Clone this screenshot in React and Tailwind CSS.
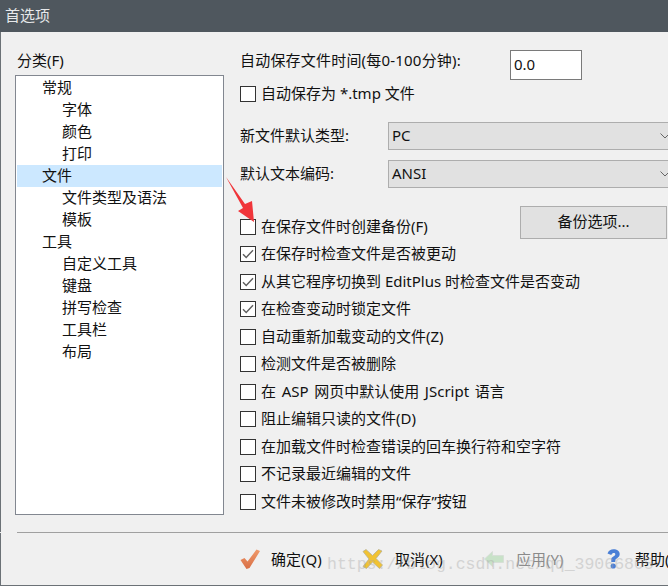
const font = { fontFamily: '"Noto Sans", "Noto Sans CJK SC", sans-serif' };

const tree = [
  ["常规", 0],
  ["字体", 1],
  ["颜色", 1],
  ["打印", 1],
  ["文件", 0, true],
  ["文件类型及语法", 1],
  ["模板", 1],
  ["工具", 0],
  ["自定义工具", 1],
  ["键盘", 1],
  ["拼写检查", 1],
  ["工具栏", 1],
  ["布局", 1],
];

const checks = [
  ["在保存文件时创建备份(F)", false],
  ["在保存时检查文件是否被更动", true],
  ["从其它程序切换到 EditPlus 时检查文件是否变动", true],
  ["在检查变动时锁定文件", true],
  ["自动重新加载变动的文件(Z)", false],
  ["检测文件是否被删除", false],
  ["在 ASP 网页中默认使用 JScript 语言", false, "[word-spacing:1.75px]"],
  ["阻止编辑只读的文件(D)", false],
  ["在加载文件时检查错误的回车换行符和空字符", false],
  ["不记录最近编辑的文件", false],
  ["文件未被修改时禁用“保存”按钮", false],
];

function Box({ checked }) {
  return (
    <span className="flex h-4 w-4 shrink-0 items-center justify-center border border-[#333333] bg-white">
      {checked && (
        <svg width="12" height="10" viewBox="0 0 12 10" fill="none">
          <path d="M1 5.2 L4.2 8.4 L11 1.2" stroke="#5e5e5e" strokeWidth="1.4" />
        </svg>
      )}
    </span>
  );
}

function Select({ label, value }) {
  return (
    <div className="flex h-7 items-center">
      <span className="w-[148px] shrink-0 pb-[2px]">{label}</span>
      <div className="flex h-7 w-[290px] shrink-0 items-center border border-[#adadad] bg-[#e1e1e1] pl-[3px] pr-[7px]">
        <span className="flex-1 pb-[2px]">{value}</span>
        <svg width="10" height="6" viewBox="0 0 10 6" fill="none">
          <path d="M0.5 0.5 L5 5 L9.5 0.5" stroke="#666666" strokeWidth="1" />
        </svg>
      </div>
    </div>
  );
}

function Ok() {
  return (
    <svg width="20" height="20" viewBox="0 0 20 20">
      <defs>
        <linearGradient id="okg" x1="0" y1="0" x2="0" y2="1">
          <stop offset="0" stopColor="#ef9a6c" />
          <stop offset="1" stopColor="#d96f45" />
        </linearGradient>
      </defs>
      <path d="M0.5 11 L4.5 9 L7.5 12.5 L16.5 0.5 L20 2 L9.5 19 L6.5 20 Z" fill="url(#okg)" />
    </svg>
  );
}

function Cancel() {
  return (
    <svg width="21" height="20" viewBox="0 0 21 20">
      <path d="M1 2.5 L4 0.5 L10.5 6.5 L16.5 0.5 L20 2 L14 9.5 L20.5 16 L17.5 19.5 L10.5 13 L4.5 19.5 L1 17.5 L7 10 Z" fill="#f1c232" stroke="#b8b08e" strokeWidth="0.8" />
    </svg>
  );
}

function Apply() {
  return (
    <svg width="20" height="16" viewBox="0 0 20 16">
      <path d="M0.5 8 L8.5 0.5 L8.5 4.5 L19.5 4.5 L19.5 11.5 L8.5 11.5 L8.5 15.5 Z" fill="#c8e2c8" stroke="#d5dcd5" strokeWidth="0.8" />
    </svg>
  );
}

function Help() {
  return (
    <svg width="13" height="20" viewBox="0 0 13 20">
      <path d="M0.5 4.5 C1.5 1.5 4 0.2 6.5 0.2 C10 0.2 12.7 2 12.7 5 C12.7 8 10 9 8.5 10.5 L8.2 13 L4.3 13 L4.3 9.5 C5.5 7.5 8.3 7 8.3 5.2 C8.3 3.5 5.2 3.5 4.3 6 Z" fill="#4a7fd6" />
      <circle cx="6.2" cy="17" r="2.6" fill="#4a7fd6" />
    </svg>
  );
}

function Action({ icon, label, disabled, boxClass, className }) {
  return (
    <div className={"flex shrink-0 items-center " + className}>
      <span className={"flex h-5 shrink-0 items-center " + boxClass}>{icon}</span>
      <span className={"whitespace-nowrap " + (disabled ? "text-[#8a8a8a]" : "")}>{label}</span>
    </div>
  );
}

export default function App() {
  return (
    <div style={font} className="relative flex h-[586px] w-[668px] flex-col overflow-hidden bg-[#f0f0f0] text-[15px] leading-[20px] text-[#111111]">
      <div className="flex h-8 shrink-0 items-center bg-[#4f575e] pb-[2px] pl-[5px] text-[#e6e8ea]">首选项</div>

      <div className="flex h-[500px] shrink-0 border-l border-[#6b7176] pl-[14px]">
        <div className="w-[209px] shrink-0 pt-[18px]">
          <div className="h-[20px] pl-[2px]">分类(F)</div>
          <div className="mt-[5px] h-[440px] border border-[#828790] bg-white p-px">
            {tree.map(([t, level, sel]) => (
              <div
                key={t}
                className={"flex h-[22px] items-center pb-[2px] " + (level ? "pl-[45px] " : "pl-[25px] ") + (sel ? "bg-[#cce8ff]" : "")}
              >
                {t}
              </div>
            ))}
          </div>
        </div>

        <div className="ml-4 min-w-0 flex-1 pt-[18px]">
          <div className="flex h-[30px] items-center">
            <span className="w-[270px] shrink-0 whitespace-nowrap pb-[10px] tracking-[0.2px]">自动保存文件时间(每0-100分钟):</span>
            <div className="flex h-[30px] w-[72px] items-center border border-[#7a7a7a] bg-white pb-[2px] pl-[3px]">0.0</div>
          </div>
          <div className="mt-[6px] flex h-4 items-center gap-[5px]">
            <Box />
            <span className="pb-[2px]">自动保存为 *.tmp 文件</span>
          </div>
          <div className="mt-5">
            <Select label="新文件默认类型:" value="PC" />
          </div>
          <div className="mt-[10px]">
            <Select label="默认文本编码:" value="ANSI" />
          </div>
          <div className="mt-[25px] flex flex-col">
            {checks.map(([t, c, extra], i) => (
              <div key={t} className="flex h-[27.5px] items-center gap-[5px]">
                <Box checked={c} />
                <span className={"whitespace-nowrap pb-[2px] " + (extra || "")}>{t}</span>
                {i === 0 && (
                  <button className="mb-[9px] ml-auto mr-px h-[33px] w-[147px] shrink-0 border border-[#adadad] bg-[#e1e1e1] pb-[2px]">备份选项...</button>
                )}
              </div>
            ))}
          </div>
        </div>
      </div>

      <div className="ml-[17px] h-px shrink-0 bg-[#a0a0a0]" />

      <div className="flex flex-1 items-start border-b border-l border-[#6b7176] pl-[239px] pt-[16px]">
        <Action icon={<Ok />} label="确定(Q)" boxClass="w-[31px]" className="w-[122px]" />
        <Action icon={<Cancel />} label="取消(X)" boxClass="w-[33px]" className="w-[122px]" />
        <Action icon={<Apply />} label="应用(Y)" boxClass="w-[32px]" disabled className="w-[123px]" />
        <Action icon={<Help />} label="帮助(H)" boxClass="w-[28px]" />
      </div>

      <svg className="absolute left-[224px] top-[175px]" width="34" height="50" viewBox="0 0 34 50">
        <path d="M2 2 L21 29 L28 26 L30 47 L14 36 L19 33 Z" fill="#f0353a" />
      </svg>

      <div className="absolute left-[327px] top-[555px] whitespace-nowrap text-[16.5px] text-[#a8a8a8] opacity-40" style={{ fontFamily: '"Liberation Mono", monospace' }}>
        https://blog.csdn.net/qq_39066805
      </div>
    </div>
  );
}
